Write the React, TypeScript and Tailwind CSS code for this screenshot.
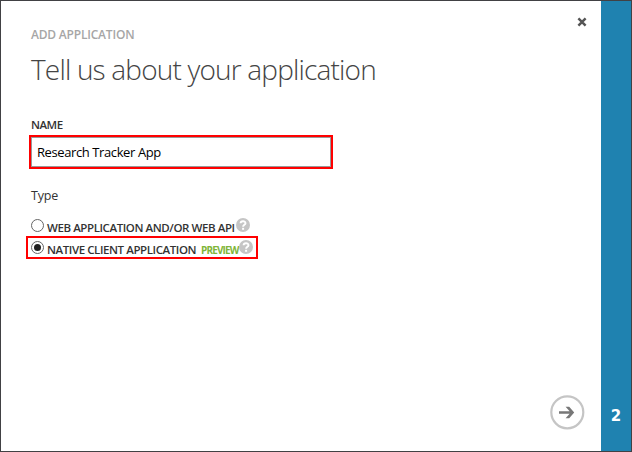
function HelpIcon() {
  return (
    <svg className="block h-[14px] w-[14px] shrink-0" viewBox="0 0 14 14" fill="none">
      <circle cx="7" cy="7" r="7" fill="#c5c5c5" />
      <path d="M4.6 5.3C4.6 2.6 9.5 2.5 9.5 5.2C9.5 6.8 7.1 6.9 7.1 8.8" stroke="#fff" strokeWidth="1.9" />
      <rect x="6.1" y="9.8" width="2" height="2" fill="#fff" />
    </svg>
  );
}

function Radio({ checked = false }: { checked?: boolean }) {
  return (
    <span className="mt-px flex h-[13px] w-[13px] shrink-0 items-center justify-center rounded-full border border-[#666] bg-white">
      {checked && <span className="h-[7px] w-[7px] rounded-full bg-[#222]" />}
    </span>
  );
}

export default function App() {
  return (
    <div className="flex h-[452px] w-[632px] overflow-hidden border border-[#414144] bg-white font-['Open_Sans','Noto_Sans',sans-serif] text-[#333]">
      <main className="flex w-[600px] flex-col">
        <div className="flex h-[46px] justify-between pt-[14px] pr-[14px] pl-[30px]">
          <h2 className="mt-[12px] h-4 text-[12px] leading-4 font-semibold tracking-[-0.2px] whitespace-nowrap text-[#a6a6a6]">
            ADD APPLICATION
          </h2>
          <button aria-label="Close" className="mt-[2px] h-[10px] w-[10px]">
            <svg className="block" width="10" height="10" viewBox="0 0 10 10">
              <path d="M1.4 1.4L8.6 8.6M8.6 1.4L1.4 8.6" stroke="#555" strokeWidth="2.5" />
            </svg>
          </button>
        </div>
        <h1 className="ml-[30px] h-[44px] text-[28px] leading-[44px] font-light tracking-[-0.82px] whitespace-nowrap text-[#444]">
          Tell us about your application
        </h1>
        <label className="mt-[25px] ml-[30px] h-[19px] text-[11.5px] leading-[18px] font-semibold tracking-[-0.5px]">NAME</label>
        <div className="ml-[28px] h-[34px] w-[304px] border-2 border-[#f00]">
          <div className="h-[30px] w-[300px] border border-[#999] pl-[5px] text-[13px] leading-[28px] tracking-[-0.4px] whitespace-nowrap text-black">
            Research Tracker App
          </div>
        </div>
        <div className="mt-[18px] ml-[30px] h-[18px] text-[12.5px] leading-[18px] tracking-[-0.2px]">Type</div>
        <div className="mt-[13px] ml-[30px] flex h-[18px] items-start">
          <Radio />
          <span className="mt-px ml-[3px] w-[189px] text-[11.5px] leading-[18px] font-semibold tracking-[-0.42px] whitespace-nowrap">
            WEB APPLICATION AND/OR WEB API
          </span>
          <HelpIcon />
        </div>
        <div className="ml-[25px] flex h-[23px] w-[232px] items-start border-2 border-[#f00] pt-[2px] pl-[3px]">
          <Radio checked />
          <span className="mt-px ml-[3px] w-[154px] text-[11.5px] leading-[18px] font-semibold tracking-[-0.42px] whitespace-nowrap">
            NATIVE CLIENT APPLICATION
          </span>
          <span className="mt-px w-[38px] text-[10px] leading-[18px] font-bold tracking-[-0.85px] whitespace-nowrap text-[#7fb539]">
            PREVIEW
          </span>
          <HelpIcon />
        </div>
        <button aria-label="Next" className="mt-auto mr-[16px] mb-[21px] h-[35px] w-[35px] self-end">
          <svg className="block" width="35" height="35" viewBox="0 0 35 35" fill="none">
            <circle cx="17.3" cy="17.3" r="16" stroke="#c5c5c5" strokeWidth="2.2" />
            <path d="M9 16.2H19.6L15.6 11.7H19.2L24.2 17.5L19.2 23.3H15.6L19.6 18.8H9Z" fill="#777" />
          </svg>
        </button>
      </main>
      <aside className="flex w-[30px] items-end justify-center bg-[#1f82b0] pb-[24px] font-['DejaVu_Sans',sans-serif] text-[15px] leading-[22px] font-bold text-white">
        2
      </aside>
    </div>
  );
}
